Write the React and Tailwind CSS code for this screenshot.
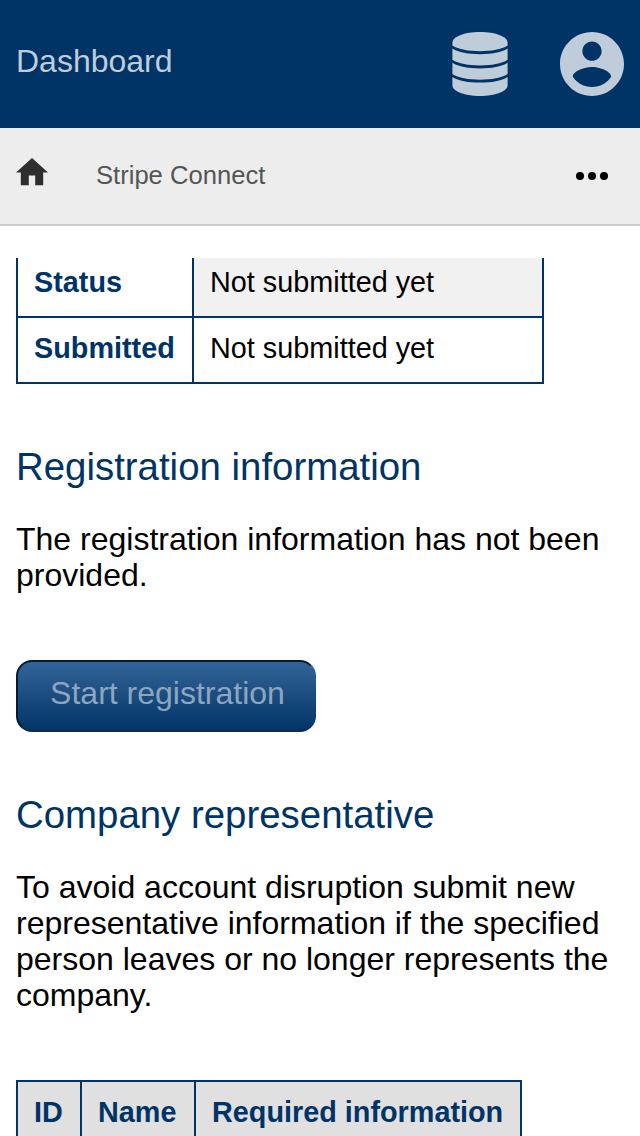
function DatabaseIcon() {
  return (
    <svg className="h-16 w-14" viewBox="0 0 56 64" fill="currentColor">
      <path d="M28 0C44 0 55.600 4.800 55.600 10.700V13.500C49.500 17.500 39.500 19.200 28 19.200S6.500 17.500 .4 13.500V10.700C.4 4.800 12 0 28 0Z" />
      <path d="M.4 16.500C6.500 20.500 16.500 22.200 28 22.200S49.500 20.500 55.600 16.500V27.800C49.500 31.800 39.500 33.500 28 33.500S6.500 31.800 .4 27.800Z" />
      <path d="M.4 30.700C6.500 34.700 16.500 36.400 28 36.400S49.500 34.700 55.600 30.700V42C49.500 46 39.500 47.700 28 47.700S6.500 46 .4 42Z" />
      <path d="M.4 44.900C6.500 48.900 16.500 50.600 28 50.600S49.500 48.900 55.600 44.900V53.300C55.600 59.200 44 64 28 64S.4 59.200 .4 53.300Z" />
    </svg>
  );
}

function AccountIcon() {
  return (
    <svg className="size-16" viewBox="2 2 20 20" fill="currentColor">
      <path d="M12 2C6.480 2 2 6.480 2 12s4.480 10 10 10 10-4.480 10-10S17.520 2 12 2zm0 3c1.660 0 3 1.340 3 3s-1.340 3-3 3-3-1.340-3-3 1.340-3 3-3zm0 14.200c-2.500 0-4.710-1.280-6-3.220.030-1.990 4-3.080 6-3.080 1.990 0 5.970 1.090 6 3.080-1.290 1.940-3.500 3.220-6 3.220z" />
    </svg>
  );
}

function Header() {
  return (
    <header className="flex h-32 shrink-0 items-center justify-between bg-[#003366] px-4 text-[#bfccd9]">
      <span className="pb-1.5 text-[32px] leading-9">Dashboard</span>
      <div className="flex gap-[52px]">
        <DatabaseIcon />
        <AccountIcon />
      </div>
    </header>
  );
}

function Breadcrumb() {
  return (
    <nav className="flex h-[98px] shrink-0 items-center border-b-2 border-[#cacaca] bg-[#ededed] px-4">
      <svg className="mb-2 h-[27.2px] w-8 shrink-0" viewBox="2 3 20 17" fill="#2e2e2e">
        <path d="M10 20v-6h4v6h5v-8h3L12 3 2 12h3v8z" />
      </svg>
      <span className="ml-12 flex-1 pb-0.5 text-[25.6px] leading-8 text-[#555]">Stripe Connect</span>
      <svg className="mr-4 h-2 w-8" viewBox="0 0 32 8">
        <circle cx="4" cy="4" r="4" />
        <circle cx="16" cy="4" r="4" />
        <circle cx="28" cy="4" r="4" />
      </svg>
    </nav>
  );
}

function StatusRow({ label, value, first }) {
  return (
    <div className={`flex border-b-2 border-[#003366] ${first ? "h-[60px]" : "h-[66px]"}`}>
      <div className="flex w-[178px] shrink-0 items-end border-x-2 border-[#003366] px-4 pb-[18px] font-bold text-[#003366]">
        {label}
      </div>
      <div className={`flex flex-1 items-end border-r-2 border-[#003366] px-4 pb-[18px] ${first ? "bg-[#f1f1f1]" : "bg-white"}`}>
        {value}
      </div>
    </div>
  );
}

function Heading({ children }) {
  return <h2 className="text-[38.4px] leading-[44px] text-[#003366]">{children}</h2>;
}

export default function App() {
  return (
    <div className="flex h-[1136px] w-[640px] flex-col overflow-hidden bg-white font-['Liberation_Sans',Arial,sans-serif] text-black">
      <Header />
      <Breadcrumb />
      <main className="mt-8 flex-1 overflow-hidden px-4">
        <div className="w-[528px] text-[28.8px] leading-8">
          <StatusRow label="Status" value="Not submitted yet" first />
          <StatusRow label="Submitted" value="Not submitted yet" />
        </div>

        <section className="pt-[61px]">
          <Heading>Registration information</Heading>
          <p className="mt-8 text-[32px] leading-9">The registration information has not been provided.</p>
          <button className="mt-[67px] block h-[72px] w-[300px] rounded-2xl border-2 border-t-[#001a33] border-r-transparent border-b-[#0f2c4f] border-l-[#001a33] bg-linear-to-b from-[#336699] to-[#003366] bg-origin-border pb-1.5 pl-[3px] text-[32px] leading-9 whitespace-nowrap text-[#8ca6c0]">
            Start registration
          </button>
        </section>

        <section className="pt-[61px]">
          <Heading>Company representative</Heading>
          <p className="mt-8 text-[32px] leading-9">
            To avoid account disruption submit new representative information if the specified person leaves or no longer represents the company.
          </p>
          <div className="mt-[67px] flex h-[68px] w-[506px] border-2 border-[#003366] bg-[#e0e0e0] text-[28.8px] leading-8 font-bold text-[#003366]">
            <div className="w-16 border-r-2 border-[#003366] px-4 pt-3.5">ID</div>
            <div className="w-[114px] border-r-2 border-[#003366] px-4 pt-3.5">Name</div>
            <div className="flex-1 px-4 pt-3.5 whitespace-nowrap">Required information</div>
          </div>
        </section>
      </main>
    </div>
  );
}
